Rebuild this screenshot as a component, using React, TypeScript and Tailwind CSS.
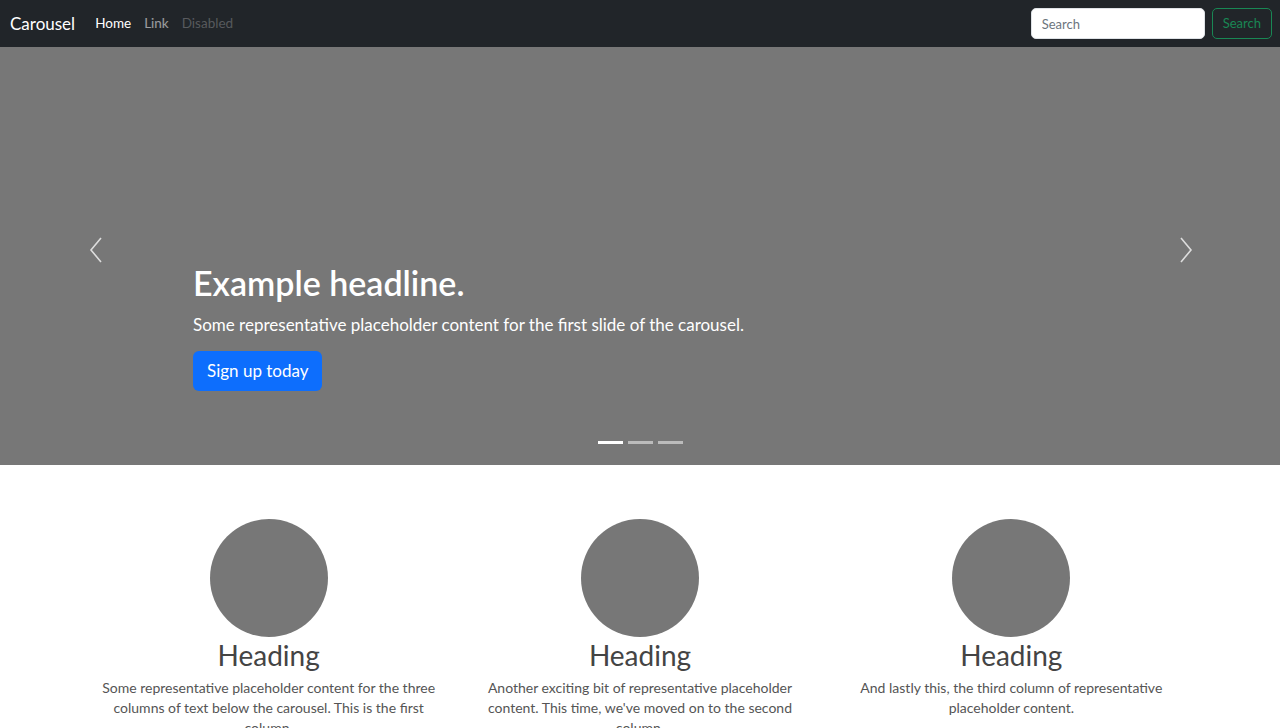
const features = [
  {
    title: "Heading",
    text: "Some representative placeholder content for the three columns of text below the carousel. This is the first column.",
  },
  {
    title: "Heading",
    text: "Another exciting bit of representative placeholder content. This time, we've moved on to the second column.",
  },
  {
    title: "Heading",
    text: "And lastly this, the third column of representative placeholder content.",
  },
];

function Chevron({ dir }: { dir: "left" | "right" }) {
  return (
    <svg width="14" height="26" viewBox="0 0 14 26" fill="none" stroke="currentColor" strokeWidth="1.6">
      {dir === "left" ? <path d="M12 1 L2 13 L12 25" /> : <path d="M2 1 L12 13 L2 25" />}
    </svg>
  );
}

export default function App() {
  return (
    <div className="min-h-screen bg-white font-['Lato','Segoe_UI',sans-serif]">
      {/* Navbar */}
      <nav className="flex h-[47px] items-center justify-between bg-[#212529] pl-[10px] pr-2">
        <div className="flex items-center">
          <a className="mr-[20px] text-[17px] text-white">Carousel</a>
          <ul className="flex items-center gap-[13px] text-[13.5px]">
            <li className="text-white">Home</li>
            <li className="text-white/55">Link</li>
            <li className="text-white/25">Disabled</li>
          </ul>
        </div>
        <form className="flex items-center gap-[7px]">
          <input
            placeholder="Search"
            className="h-[31px] w-[174px] rounded-[5px] border border-[#dee2e6] bg-white px-[10px] text-[13px] text-[#212529] placeholder:text-[#6c757d] outline-none"
          />
          <button
            type="button"
            className="h-[31px] rounded-[5px] border border-[#198754] px-[10px] text-[13px] text-[#198754]"
          >
            Search
          </button>
        </form>
      </nav>

      {/* Carousel */}
      <div className="relative flex h-[418px] items-end bg-[#777777]">
        <button className="absolute left-[89px] top-[190px] text-white/75">
          <Chevron dir="left" />
        </button>
        <button className="absolute right-[87px] top-[190px] text-white/75">
          <Chevron dir="right" />
        </button>
        <div className="mx-auto mb-[74px] w-[894px] text-white">
          <h1 className="text-[34px] font-semibold leading-[1.2]">Example headline.</h1>
          <p className="mt-[8px] text-[17px] leading-[1.5]">
            Some representative placeholder content for the first slide of the carousel.
          </p>
          <button className="mt-[14px] h-[40px] rounded-[6px] bg-[#0d6efd] px-[14px] text-[17px] text-white">
            Sign up today
          </button>
        </div>
        <div className="absolute bottom-[21px] left-0 right-0 flex justify-center gap-[5px]">
          <span className="h-[3px] w-[25px] bg-white" />
          <span className="h-[3px] w-[25px] bg-white/50" />
          <span className="h-[3px] w-[25px] bg-white/50" />
        </div>
      </div>

      {/* Marketing */}
      <div className="mx-auto grid w-[1114px] grid-cols-3 pt-[54px]">
        {features.map((f, i) => (
          <div key={i} className="flex flex-col items-center px-[12px] text-center">
            <div className="h-[118px] w-[118px] rounded-full bg-[#777777]" />
            <h2 className="mt-[2px] text-[28px] leading-[1.2] text-[#444]">{f.title}</h2>
            <p className="mt-[5px] text-[14px] leading-[20px] text-[#555]">{f.text}</p>
          </div>
        ))}
      </div>
    </div>
  );
}
